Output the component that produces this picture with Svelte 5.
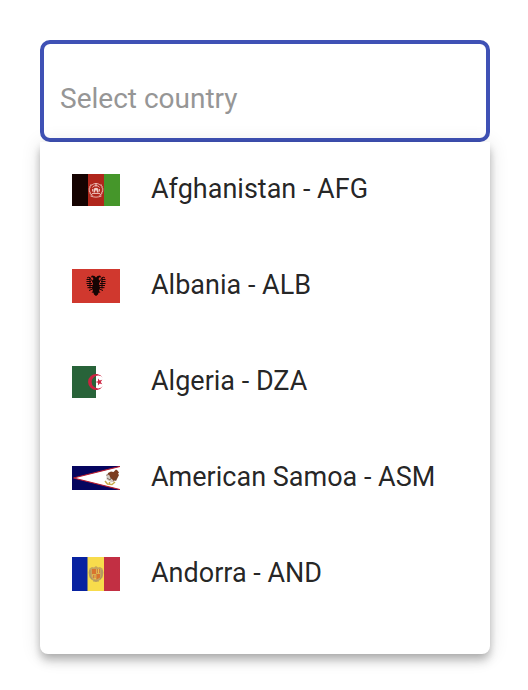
<script lang="ts">
  type Country = { name: string; code: string; height: number };

  const countries: Country[] = [
    { name: 'Afghanistan', code: 'AFG', height: 32 },
    { name: 'Albania', code: 'ALB', height: 34 },
    { name: 'Algeria', code: 'DZA', height: 32 },
    { name: 'American Samoa', code: 'ASM', height: 24 },
    { name: 'Andorra', code: 'AND', height: 34 }
  ];

  let query = $state('');
  let shown = $derived(
    countries.filter((c) => `${c.name} - ${c.code}`.toLowerCase().includes(query.toLowerCase()))
  );
</script>

{#snippet eagleHalf()}
  <path d="M24 8.500 22.500 7 20 6.500 18.500 8.500l2-.2 1 1.700-1.500 2 1 3-1 4 1 3-1.500 1.500 2 .2.5 1.800L24 27z" />
  <path
    fill="none"
    stroke="#160504"
    stroke-width="1"
    d="M21.500 13.500 17 8M17 8l-2 1M18 10.500h-3.500M19 12.500h-4.500M20 14.500h-5.500M21 16.500h-6M21.500 18.500l-6 .2M20.500 20l-3.500 1.500M18 8.500v11"
  />
{/snippet}

<main>
  <div class="picker">
    <input
      class="field"
      type="text"
      role="combobox"
      aria-label="Select country"
      aria-expanded="true"
      aria-controls="country-list"
      placeholder="Select country"
      autocomplete="off"
      bind:value={query}
    />
    <div class="panel" id="country-list" role="listbox" aria-label="Countries">
      {#each shown as c (c.code)}
        <button
          class="option"
          type="button"
          role="option"
          aria-selected="false"
          onclick={() => (query = `${c.name} - ${c.code}`)}
        >
          <svg class="flag" viewBox="0 0 48 {c.height}" width="48" height={c.height} aria-hidden="true">
            {#if c.code === 'AFG'}
              <path fill="#150301" d="M0 0h16v32H0z" />
              <path fill="#b0261b" d="M16 0h16v32H16z" />
              <path fill="#45962a" d="M32 0h16v32H32z" />
              <g fill="none" stroke="#e9b5ad">
                <path
                  stroke-width="1.400"
                  stroke-dasharray="1.600 .5"
                  d="M19.500 10.500c-3.500 4-2.500 9 1.500 11.500M28.500 10.500c3.500 4 2.500 9-1.500 11.500"
                />
                <path stroke-width="1" d="M20 11c2-2 6-2 8 0M20.500 13.500c1.500-2.500 5.500-2.500 7 0M18.500 22c3.500 1.500 7.500 1.500 11 0" />
                <path stroke-width="1" d="M20 19.500h8M20.500 17.500v-2.500M27.500 17.500v-2.500" />
              </g>
              <path fill="#f0cdc7" d="M21.500 18.500v-2.500c0-3 5-3 5 0v2.500h-1.700v-2h-1.600v2zM23.500 9.500h1v3h-1z" />
            {:else if c.code === 'ALB'}
              <path fill="#d0382e" d="M0 0h48v34H0z" />
              <g fill="#160504">
                {@render eagleHalf()}
                <g transform="matrix(-1 0 0 1 48 0)">{@render eagleHalf()}</g>
              </g>
            {:else if c.code === 'DZA'}
              <path fill="#286339" d="M0 0h24v32H0z" />
              <path
                fill="#cd2340"
                d="M30.800 11.700a8 8 0 1 0 0 8.600 6.400 6.400 0 1 1 0-8.600zM23.400 16l2.600-.8v-2.800l1.700 2.200 2.600-.8-1.600 2.200 1.600 2.200-2.600-.8-1.700 2.200v-2.800z"
              />
            {:else if c.code === 'ASM'}
              <path fill="#05055f" d="M0 0h48v24H0z" />
              <path fill="#fff" stroke="#b91d30" stroke-width="1.200" d="M49 .2 1.500 12 49 23.800z" />
              <path
                fill="#7c3d20"
                d="m36 7 3-1.500 2.500.5L44 3.500l1.500 1 1.500 2-1 1.200 1 1.300-1.500 3-1.500 3-1.500-1-1.500 2-2-2.500-2-1-2-2z"
              />
              <path fill="#d3cbc5" d="m34.500 10 2.500-1.500 1.500 3.500 3 2.500-1.500 2-3-1.500-2.500-1.500z" />
              <path
                fill="none"
                stroke="#c7a948"
                stroke-width="1.500"
                d="m33 15 2.500 3 4.500.5 3-2.500M37.500 16v2"
              />
              <path fill="none" stroke="#58463a" stroke-width=".7" d="m35 12 3 2 1.500-2.500M42.500 15l2-4M34 9.500l1.500-1" />
            {:else}
              <path fill="#0822a0" d="M0 0h16v34H0z" />
              <path fill="#f8dc4c" d="M15.500 0h17v34h-17z" />
              <path fill="#c22f43" d="M32 0h16v34H32z" />
              <path
                fill="#c6a45d"
                d="M17.500 11.500 20 10l2 .5L24 9l2 1.500 2-.5 2.500 1.500 1 4-1 5-2.500 2.500-4 2-4-2-2.500-2.500-1-5z"
              />
              <path fill="#d9742e" d="M20 12h4v5h-4zM24.500 17h3.500v3.500l-3.500 2z" />
              <path fill="#f1c145" d="M24.500 12h3.500v4.500h-3.500zM20 17.500h4v5l-3-1.500z" />
              <path fill="none" stroke="#b6514b" d="M25.500 12v4M27.500 12v4M21.500 18v3M23 18v3" stroke-width=".6" />
              <path fill="none" stroke="#a28d68" stroke-width=".8" d="M18 13v6l2 3.500M30 13v6l-2 3.500M21 24h6" />
            {/if}
          </svg>
          <span class="label">{c.name} - {c.code}</span>
        </button>
      {/each}
    </div>
  </div>
</main>

<style>
  :global(body) {
    background: #fff;
  }

  main {
    padding: 40px 38px 36px 40px;
    font-family: Roboto, 'Liberation Sans', sans-serif;
  }

  .picker {
    display: flex;
    flex-direction: column;
  }

  .field {
    box-sizing: border-box;
    width: 100%;
    height: 102px;
    padding: 14px 16px 0;
    border: 4px solid #3f51b5;
    border-radius: 10px;
    outline: none;
    background: #fff;
    color: rgba(0, 0, 0, 0.87);
    font: inherit;
    font-size: 28px;
  }

  .field::placeholder {
    color: #969696;
    opacity: 1;
  }

  .panel {
    position: relative;
    padding-bottom: 32px;
    border-radius: 0 0 8px 8px;
    background: #fff;
    box-shadow:
      0 4px 8px -2px rgba(0, 0, 0, 0.2),
      0 8px 10px 0 rgba(0, 0, 0, 0.14),
      0 2px 20px 0 rgba(0, 0, 0, 0.12);
  }

  .option {
    display: flex;
    align-items: center;
    gap: 31px;
    width: 100%;
    height: 96px;
    padding: 0 32px;
    border: 0;
    background: none;
    color: rgba(0, 0, 0, 0.87);
    font: inherit;
    font-size: 27px;
    text-align: left;
    white-space: nowrap;
    cursor: pointer;
  }

  .flag {
    flex: none;
  }

  .label {
    padding-bottom: 2px;
  }
</style>
